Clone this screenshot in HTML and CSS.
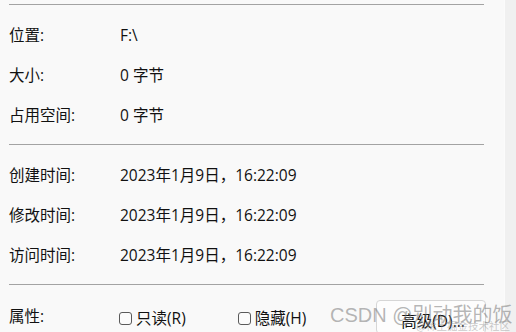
FILE: index.html
```html
<!DOCTYPE html>
<html lang="zh-CN">
<head>
<meta charset="utf-8">
<link rel="stylesheet" href="styles.css">
</head>
<body>
<div class="window">
  <div class="panel">
    <div class="sep"></div>
    <div class="group">
      <div class="row"><span class="label">位置:</span><span class="value">F:\</span></div>
      <div class="row"><span class="label">大小:</span><span class="value">0 字节</span></div>
      <div class="row"><span class="label">占用空间:</span><span class="value">0 字节</span></div>
    </div>
    <div class="sep"></div>
    <div class="group">
      <div class="row"><span class="label">创建时间:</span><span class="value">2023年1月9日，16:22:09</span></div>
      <div class="row"><span class="label">修改时间:</span><span class="value">2023年1月9日，16:22:09</span></div>
      <div class="row"><span class="label">访问时间:</span><span class="value">2023年1月9日，16:22:09</span></div>
    </div>
    <div class="sep"></div>
    <div class="group">
      <div class="row attrs">
        <span class="label">属性:</span>
        <div class="checks">
          <label class="check"><span class="box"></span>只读(R)</label>
          <label class="check second"><span class="box"></span>隐藏(H)</label>
          <button class="adv">高级(D)...</button>
        </div>
      </div>
    </div>
  </div>
  <div class="scrollbar"></div>
  <div class="watermark">
    <span class="wm-main">CSDN @别动我的饭</span>
    <span class="wm-sub">@稀土掘金技术社区</span>
  </div>
</div>
</body>
</html>
```
FILE: styles.css
```css
html, body {
  margin: 0;
  padding: 0;
  width: 516px;
  height: 332px;
  overflow: hidden;
  background: #f9f9f9;
}
body {
  font-family: "Open Sans", "Noto Sans CJK SC", sans-serif;
  font-size: 15.5px;
  color: #111;
}
.window {
  position: relative;
  display: flex;
  width: 516px;
  height: 332px;
  overflow: hidden;
}
.panel {
  flex: 1;
  min-width: 0;
  padding: 4px 20px 0 9px;
}
.sep {
  height: 1px;
  background: #a3a3a3;
}
.group {
  padding: 10px 0 9px;
}
.row {
  display: grid;
  grid-template-columns: 111px minmax(0, 1fr);
  align-items: center;
  height: 40px;
}
.label, .value {
  line-height: 20px;
  white-space: nowrap;
}
.row.attrs {
  align-items: start;
}
.attrs .label {
  padding-top: 11px;
}
.checks {
  display: flex;
  align-items: flex-start;
  padding-top: 5px;
}
.check {
  display: flex;
  align-items: center;
  flex-shrink: 0;
  white-space: nowrap;
  gap: 4px;
  margin-left: -1px;
  margin-top: 8px;
  line-height: 20px;
}
.check.second {
  margin-left: 52px;
}
.box {
  flex-shrink: 0;
  width: 11px;
  height: 11px;
  border: 1px solid #5a5a5a;
  border-radius: 3px;
  background: #fbfbfb;
}
.adv {
  flex-shrink: 0;
  margin-left: 70px;
  width: 110px;
  height: 34px;
  border: 1px solid #d6d6d6;
  border-radius: 4px;
  background: #fdfdfd;
  font: inherit;
  color: #111;
  text-align: left;
  white-space: nowrap;
  line-height: 20px;
  padding: 7px 0 0 24px;
}
.scrollbar {
  width: 11px;
  background: #f0f0f0;
  border-left: 1px solid #fbfbfb;
}
.watermark {
  position: absolute;
  left: 330px;
  top: 303px;
  width: 186px;
  height: 29px;
  pointer-events: none;
}
.wm-main {
  position: absolute;
  left: 0;
  top: -4px;
  font-size: 20px;
  color: rgba(120, 120, 120, 0.55);
  white-space: nowrap;
  font-family: "Liberation Sans", "Noto Sans CJK SC", sans-serif;
}
.wm-sub {
  position: absolute;
  left: 86px;
  top: 15px;
  font-size: 10.5px;
  color: rgba(150, 150, 150, 0.5);
  white-space: nowrap;
  font-family: "Noto Sans CJK SC", sans-serif;
}
```
